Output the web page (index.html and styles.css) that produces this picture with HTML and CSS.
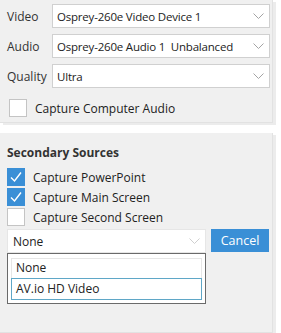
FILE: index.html
```html
<!DOCTYPE html>
<html>
<head>
    <title>Sources</title>
    <link rel="stylesheet" href="styles.css">
</head>
<body>
    <!-- primary capture settings -->
    <div class="panel panel-top">
        <div class="row">
            <span class="label">Video</span>
            <div class="combo"><span class="value">Osprey-260e Video Device 1</span><svg class="chevron" viewBox="0 0 11 6" width="11" height="6"><polyline points="0.5,0.5 5.5,5.5 10.5,0.5" fill="none" stroke="#a4a4a4" stroke-width="1"/></svg></div>
        </div>
        <div class="row">
            <span class="label">Audio</span>
            <div class="combo"><span class="value">Osprey-260e Audio 1&nbsp; Unbalanced</span><svg class="chevron" viewBox="0 0 11 6" width="11" height="6"><polyline points="0.5,0.5 5.5,5.5 10.5,0.5" fill="none" stroke="#a4a4a4" stroke-width="1"/></svg></div>
        </div>
        <div class="row">
            <span class="label">Quality</span>
            <div class="combo"><span class="value">Ultra</span><svg class="chevron" viewBox="0 0 11 6" width="11" height="6"><polyline points="0.5,0.5 5.5,5.5 10.5,0.5" fill="none" stroke="#a4a4a4" stroke-width="1"/></svg></div>
        </div>
        <label class="check check-audio">
            <span class="box"></span>
            <span>Capture Computer Audio</span>
        </label>
    </div>

    <!-- secondary sources -->
    <div class="panel panel-bottom">
        <div class="heading">Secondary Sources</div>
        <label class="check">
            <span class="box checked"><svg viewBox="0 0 18 18" width="18" height="18"><path d="M4 9.5 L7.5 13 L14 4.5" fill="none" stroke="#fff" stroke-width="1.4"/></svg></span>
            <span>Capture PowerPoint</span>
        </label>
        <label class="check">
            <span class="box checked"><svg viewBox="0 0 18 18" width="18" height="18"><path d="M4 9.5 L7.5 13 L14 4.5" fill="none" stroke="#fff" stroke-width="1.4"/></svg></span>
            <span>Capture Main Screen</span>
        </label>
        <label class="check">
            <span class="box"></span>
            <span>Capture Second Screen</span>
        </label>
        <div class="picker">
            <div class="picker-left">
                <div class="combo combo-open"><span class="value">None</span><svg class="chevron" viewBox="0 0 11 6" width="11" height="6"><polyline points="0.5,0.5 5.5,5.5 10.5,0.5" fill="none" stroke="#cfcfcf" stroke-width="1"/></svg></div>
                <div class="list">
                    <div class="item item-plain">None</div>
                    <div class="item item-focus">AV.io HD Video</div>
                </div>
            </div>
            <button class="cancel">Cancel</button>
        </div>
    </div>
</body>
</html>
```

FILE: styles.css
```css
body {
    margin: 0;
    background: #fff;
    font-family: "Open Sans", "Noto Sans", sans-serif;
    font-size: 12px;
    color: #222;
    width: 281px;
    height: 333px;
    overflow: hidden;
}
.panel {
    background: #f0f0f0;
    width: 273px;
    border-right: 1px solid #e2e2e2;
    border-bottom: 1px solid #e2e2e2;
    box-shadow: 3px 2px 0 #ececec;
    box-sizing: border-box;
}
.panel-top {
    height: 123px;
    padding: 4px 0 0 7px;
}
.panel-bottom {
    margin-top: 10px;
    height: 200px;
    padding: 11px 0 0 7px;
}
.row {
    display: flex;
    align-items: center;
    height: 24px;
    margin-bottom: 6px;
}
.label {
    width: 45px;
    color: #333;
}
.combo {
    display: flex;
    align-items: center;
    height: 24px;
    width: 218px;
    background: #fff;
    border: 1px solid #d0d0d0;
    box-sizing: border-box;
    padding: 0 5px 0 4px;
    overflow: hidden;
    font-size: 11.5px;
    letter-spacing: -0.2px;
}
.value {
    flex: 1;
    white-space: nowrap;
    overflow: hidden;
}
.chevron {
    flex: none;
    margin-left: 3px;
    display: block;
}
.check {
    display: flex;
    align-items: center;
    height: 20px;
    gap: 8px;
}
.check-audio {
    margin-top: 10px;
    padding-left: 2px;
}
.box {
    width: 18px;
    height: 18px;
    background: #fff;
    border: 1px solid #c4c4c4;
    box-sizing: border-box;
    display: block;
}
.box.checked {
    background: #3a8fd6;
    border: none;
}
.box svg {
    display: block;
}
.heading {
    font-weight: bold;
    color: #333;
    margin-bottom: 6px;
}
.picker {
    display: flex;
    align-items: flex-start;
    margin-top: 2px;
}
.picker-left {
    width: 199px;
}
.combo-open {
    width: 199px;
    border-color: #e6e6e6;
    padding-left: 5px;
    font-size: 12px;
    letter-spacing: 0;
}
.list {
    background: #fff;
    border: 1px solid #6a6a6a;
    height: 51px;
    box-sizing: border-box;
    padding: 4px 3px;
}
.item {
    height: 20px;
    box-sizing: border-box;
    padding-left: 4px;
    line-height: 18px;
}
.item-plain {
    border: 1px solid #e6e6e6;
    border-bottom: none;
}
.item-focus {
    border: 1px solid #5fa7c7;
    height: 22px;
    line-height: 20px;
}
.cancel {
    margin-left: 5px;
    width: 58px;
    height: 23px;
    background: #3a8fd6;
    color: #fff;
    border: none;
    font-family: inherit;
    font-size: 12.5px;
    padding: 0;
}
```
